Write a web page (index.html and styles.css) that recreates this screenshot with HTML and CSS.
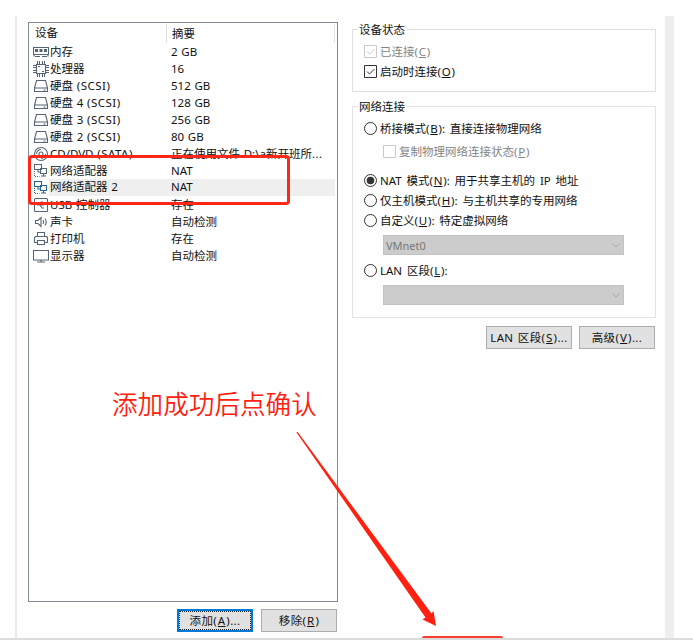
FILE: index.html
```html
<!DOCTYPE html>
<html lang="zh-CN">
<head>
<meta charset="utf-8">
<title>虚拟机设置</title>
<link rel="stylesheet" href="styles.css">
</head>
<body>
<svg class="defs" aria-hidden="true">
  <symbol id="disk" viewBox="0 0 16 16"><path d="M3.500 2.500h9l2 7.500v3.500h-13V10zM1.500 10h13M10.500 12h2"/></symbol>
  <symbol id="net" viewBox="0 0 16 16"><path d="M1.500 1.500h7v5h-7zM5 6.500v2.500h2.500M7.500 5.500h6v5h-6zM10.500 10.500v2M8 13h5"/><path stroke-dasharray="1 1" d="M1.500 8v5.500h5"/></symbol>
</svg>
<main class="window">
  <section class="left">
    <div class="list">
      <div class="row head"><span class="name">设备</span><span class="sum">摘要</span></div>
      <div class="row"><svg class="ico" viewBox="0 0 16 16"><path d="M.5 3.500h15v7H.5zM2 12.500h5M9 12.500h5M1 10.500v2M15 10.500v2"/><path class="solid" d="M2 5h3v3H2zM6.500 5h3v3h-3zM11 5h3v3h-3z"/></svg><span class="name">内存</span><span class="sum">2 GB</span></div>
      <div class="row"><svg class="ico" viewBox="0 0 16 16"><path d="M3.500 3.500h9v9h-9z"/><path d="M4.500 0v3M6.500 0v3M9.500 0v3M11.500 0v3M4.500 13v3M6.500 13v3M9.500 13v3M11.500 13v3M0 4.500h3M0 6.500h3M0 9.500h3M0 11.500h3M13 4.500h3M13 6.500h3M13 9.500h3M13 11.500h3M5 5.500h2M9 10.500h2"/></svg><span class="name">处理器</span><span class="sum">16</span></div>
      <div class="row"><svg class="ico"><use href="#disk"/></svg><span class="name">硬盘 <i>(SCSI)</i></span><span class="sum">512 GB</span></div>
      <div class="row"><svg class="ico"><use href="#disk"/></svg><span class="name">硬盘 4 <i>(SCSI)</i></span><span class="sum">128 GB</span></div>
      <div class="row"><svg class="ico"><use href="#disk"/></svg><span class="name">硬盘 3 <i>(SCSI)</i></span><span class="sum">256 GB</span></div>
      <div class="row"><svg class="ico"><use href="#disk"/></svg><span class="name">硬盘 2 <i>(SCSI)</i></span><span class="sum">80 GB</span></div>
      <div class="row"><svg class="ico" viewBox="0 0 16 16"><circle cx="8" cy="8" r="6.500"/><circle cx="8" cy="8" r="2"/><path d="M8 3.500a4.500 4.500 0 0 0-4.500 4.500M8 12.500a4.500 4.500 0 0 0 4.500-4.500"/></svg><span class="name">CD/DVD <i>(SATA)</i></span><span class="sum">正在使用文件 D:\a新开班所<i>...</i></span></div>
      <div class="row"><svg class="ico"><use href="#net"/></svg><span class="name">网络适配器</span><span class="sum">NAT</span></div>
      <div class="row selected"><svg class="ico blue"><use href="#net"/></svg><span class="name">网络适配器 2</span><span class="sum">NAT</span></div>
      <div class="row"><svg class="ico" viewBox="0 0 16 16"><rect x="1.500" y="1.500" width="13" height="13" rx="1"/><path d="M4 8h7M6 8l2-3h2M7 8l2 3h2"/></svg><span class="name">USB 控制器</span><span class="sum">存在</span></div>
      <div class="row"><svg class="ico" viewBox="0 0 16 16"><path d="M2.500 6.500H5l3-3v9l-3-3H2.500zM10 6q1.500 2 0 4M12 4.500q2.500 3.500 0 7"/></svg><span class="name">声卡</span><span class="sum">自动检测</span></div>
      <div class="row"><svg class="ico" viewBox="0 0 16 16"><path d="M4.500 5.500v-4h7v4M4 11.500H1.500v-5l1-1h11l1 1v5H12M4.500 9.500h7v4h-7z"/></svg><span class="name">打印机</span><span class="sum">存在</span></div>
      <div class="row"><svg class="ico" viewBox="0 0 16 16"><path d="M.5 2.500h15v9.500H.5zM4 14h8M8 12v2"/></svg><span class="name">显示器</span><span class="sum">自动检测</span></div>
    </div>
    <div class="buttons">
      <button class="btn primary">添加(<u>A</u>)...</button>
      <button class="btn">移除(<u>R</u>)</button>
    </div>
  </section>
  <section class="right">
    <div class="group status">
      <div class="title">设备状态</div>
      <label class="opt off"><svg class="mark" viewBox="0 0 13 13"><path d="M.5.5h12v12H.5zM3 6.500l2.500 2.500L10.500 4"/></svg>已连接(<u>C</u>)</label>
      <label class="opt"><svg class="mark" viewBox="0 0 13 13"><path d="M.5.5h12v12H.5zM3 6.500l2.500 2.500L10.500 4"/></svg>启动时连接(<u>O</u>)</label>
    </div>
    <div class="group network">
      <div class="title">网络连接</div>
      <label class="opt"><svg class="mark" viewBox="0 0 13 13"><circle cx="6.500" cy="6.500" r="6"/></svg>桥接模式(<u>B</u>): 直接连接物理网络</label>
      <label class="opt off sub"><svg class="mark" viewBox="0 0 13 13"><path d="M.5.5h12v12H.5z"/></svg>复制物理网络连接状态(<u>P</u>)</label>
      <label class="opt"><svg class="mark" viewBox="0 0 13 13"><circle cx="6.500" cy="6.500" r="6"/><circle class="dot" cx="6.500" cy="6.500" r="3.800"/></svg>NAT 模式(<u>N</u>): 用于共享主机的 IP 地址</label>
      <label class="opt"><svg class="mark" viewBox="0 0 13 13"><circle cx="6.500" cy="6.500" r="6"/></svg>仅主机模式(<u>H</u>): 与主机共享的专用网络</label>
      <label class="opt"><svg class="mark" viewBox="0 0 13 13"><circle cx="6.500" cy="6.500" r="6"/></svg>自定义(<u>U</u>): 特定虚拟网络</label>
      <div class="combo"><span>VMnet0</span><svg class="chev" viewBox="0 0 8 5"><path d="M.5.5L4 4 7.500.5"/></svg></div>
      <label class="opt lan"><svg class="mark" viewBox="0 0 13 13"><circle cx="6.500" cy="6.500" r="6"/></svg>LAN 区段(<u>L</u>):</label>
      <div class="combo"><span></span><svg class="chev" viewBox="0 0 8 5"><path d="M.5.5L4 4 7.500.5"/></svg></div>
    </div>
    <div class="buttons">
      <button class="btn wide">LAN 区段(<u>S</u>)...</button>
      <button class="btn">高级(<u>V</u>)...</button>
    </div>
  </section>
</main>
<div class="highlight"></div>
<div class="note">添加成功后点确认</div>
<svg class="arrow" viewBox="0 0 693 644"><path d="M296.500 432.500L297.500 431.800L431.500 613.500L433.500 611L436 626L422.500 619.500L425.500 617.500Z"/></svg>
<div class="okline"></div>
</body>
</html>
```
FILE: styles.css
```css
* { box-sizing: border-box; }
body {
  margin: 0;
  width: 693px;
  height: 644px;
  overflow: hidden;
  padding: 16px 0 0 15px;
  background: #fff;
  color: #111;
  font: 11.5px/17px "Noto Sans", "Noto Sans CJK SC", sans-serif;
  word-spacing: 0.7px;
  position: relative;
}
body::after {
  content: "";
  position: absolute;
  left: 0;
  right: 0;
  top: 638px;
  height: 2px;
  background: #dcdcdc;
}
.defs { position: absolute; width: 0; height: 0; }
.window {
  display: flex;
  gap: 14px;
  width: 659px;
  height: 622px;
  padding: 6px 10px 0 11px;
  border-left: 2px solid #ebebeb;
  border-right: 9px solid #eee;
  background: #fefefe;
}
.left { width: 310px; flex: none; }
.list {
  height: 580px;
  border: 1px solid #828790;
  padding: 1px 2px 0 4px;
  background: #fff;
}
.row { display: flex; height: 17px; align-items: center; white-space: nowrap; }
.row span { line-height: 16px; }
.row i { font-style: normal; letter-spacing: 0.5px; }
.row.head { height: 19px; border-right: 1px solid #e5e5e5; }
.row.head .name { width: 134px; padding-left: 2px; border-right: 1px solid #e0e0e0; height: 19px; line-height: 18px; }
.row.head .sum { line-height: 18px; }
.ico { width: 16px; height: 16px; flex: none; fill: none; stroke: #566573; stroke-width: 1.1; }
.ico.blue { stroke: #286491; }
.ico .solid { fill: #566573; stroke: none; }
.name { width: 117px; flex: none; padding-left: 1px; }
.sum { flex: 1; padding-left: 5px; }
.selected .name, .selected .sum { background: #efefef; height: 17px; }
.buttons { display: flex; justify-content: flex-end; gap: 8px; padding-top: 7px; }
.btn {
  width: 76px;
  height: 23px;
  padding: 0;
  border: 1px solid #adadad;
  background: #e1e1e1;
  color: #111;
  font: inherit;
  letter-spacing: 0.35px;
  word-spacing: 1px;
}
.btn.wide { width: 86px; }
.btn.primary { border: 2px solid #0078d7; outline: 1px dotted #222; outline-offset: -3px; }
.left .buttons { padding-right: 1px; }
u { margin: 0 0.8px; text-decoration: underline; text-decoration-thickness: 1px; text-underline-offset: 1px; }
.right { width: 304px; flex: none; }
.group { border: 1px solid #dfdfdf; padding: 0 0 0 11px; }
.title {
  width: max-content;
  height: 17px;
  margin: -9px 0 0 -6px;
  padding: 0 2px 0 1px;
  background: #fefefe;
}
.status { height: 63px; margin-top: 7px; }
.network { height: 212px; margin-top: 14px; border-color: #e4e4e4; }
.opt { display: flex; height: 20px; align-items: center; white-space: pre; word-spacing: 1.8px; }
.mark { width: 13px; height: 13px; margin-right: 3px; flex: none; fill: #fff; stroke: #333; stroke-width: 1; }
.mark .dot { fill: #333; stroke: none; }
.off { color: #858585; }
.off .mark { stroke: #c9c9c9; }
.status .title, .network .title { margin-bottom: 3px; }
.sub { margin: 3px 0 9px 19px; }
.combo {
  display: flex;
  align-items: center;
  justify-content: space-between;
  width: 241px;
  height: 20px;
  margin: 5px 0 0 19px;
  padding: 0 3px 0 2px;
  border: 1px solid #c2c2c2;
  background: #ccc;
  color: #777;
}
.combo span { font-size: 11px; }
.chev { width: 8px; height: 5px; fill: none; stroke: #a6a6a6; }
.lan { margin-top: 5px; }
.right .buttons { padding: 8px 1px 0 0; gap: 7px; }
.highlight {
  position: absolute;
  left: 28px;
  top: 155px;
  width: 262px;
  height: 50px;
  border: 3px solid #ff2718;
  border-radius: 4px;
}
.note {
  position: absolute;
  left: 112px;
  top: 384px;
  color: #ff2010;
  font: 350 25.6px/38px "Noto Sans CJK SC DemiLight", "Noto Sans CJK SC", sans-serif;
  white-space: nowrap;
}
.arrow { position: absolute; left: 0; top: 0; width: 693px; height: 644px; fill: #ff2010; }
.okline { position: absolute; left: 422px; top: 636px; width: 81px; height: 2px; background: #fb3e32; border-radius: 2px 2px 0 0; }
```
